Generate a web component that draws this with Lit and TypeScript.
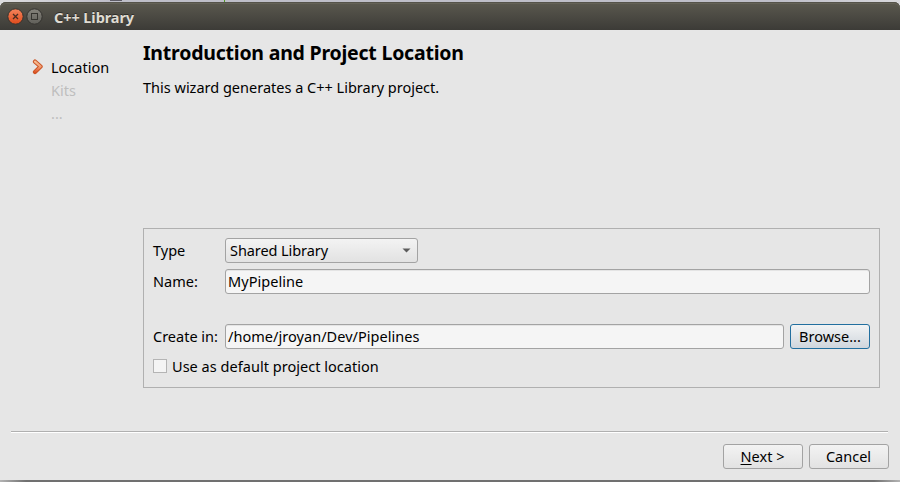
import { LitElement, html, css } from "lit";
import { customElement } from "lit/decorators.js";

@customElement("app-root")
export class AppRoot extends LitElement {
  static styles = css`
    :host {
      display: flex;
      flex-direction: column;
      box-sizing: border-box;
      width: 900px;
      height: 482px;
      overflow: hidden;
      background: linear-gradient(90deg, #dedee0, #bebec8 110px, #bebec8 780px, #d8d8dc);
      font: 14.5px/20px "Noto Sans", sans-serif;
      color: #000;
      white-space: nowrap;
    }
    * { box-sizing: border-box; }
    .desktop {
      flex: none;
      height: 2px;
      display: flex;
    }
    .tab { width: 12px; height: 1px; margin-left: 110px; background: #5c5a64; }
    .caret { width: 1px; height: 2px; margin-left: 102px; background: #4f9a22; }
    .titlebar {
      flex: none;
      height: 28px;
      display: flex;
      align-items: center;
      padding: 1px 0 0 7px;
      border-radius: 6px 6px 0 0;
      background: linear-gradient(#5b594f, #3c3b37);
      box-shadow: inset 0 1px #55534a, inset 0 2px #646257;
    }
    .titlebar svg { display: block; margin-right: 2px; }
    .caption {
      margin-left: 9px;
      font-weight: 700;
      font-size: 14.5px;
      color: #dfdbd2;
      letter-spacing: -0.08px;
      text-shadow: 0 -1px #2e2d2a;
    }
    .body {
      flex: none;
      height: 450px;
      background: #e6e6e6;
      display: flex;
      flex-direction: column;
    }
    .main { display: flex; height: 401px; }
    .steps { width: 143px; padding: 27px 0 0 32px; }
    .step { display: flex; height: 23px; line-height: 20px; color: #bebebe; }
    .mark { width: 19px; padding-top: 2px; }
    .mark svg { display: block; }
    .current { color: #000; }
    .page { width: 737px; }
    h1 {
      margin: 0;
      padding-top: 9px;
      font-size: 19.5px;
      line-height: 27px;
      font-weight: 700;
      letter-spacing: -0.22px;
    }
    .intro { margin-top: 11px; }
    .form {
      margin-top: 131px;
      height: 160px;
      border: 1px solid #b0b0b0;
      padding: 9px;
      display: flex;
      flex-direction: column;
    }
    .row { display: flex; height: 25px; margin-bottom: 6px; line-height: 25px; }
    .row.name { margin-bottom: 30px; }
    .row.location { margin-bottom: 10px; }
    .label { width: 72px; flex: none; }
    .field {
      flex: 1;
      height: 25px;
      line-height: 23px;
      border: 1px solid #a3a3a3;
      border-radius: 3px;
      background: #f5f5f5;
      box-shadow: inset 0 1px #e4e4e4;
      padding-left: 2px;
      letter-spacing: 0.04px;
    }
    .combo {
      width: 193px;
      height: 25px;
      line-height: 23px;
      border: 1px solid #a3a3a3;
      border-radius: 3px;
      background: linear-gradient(#f3f3f3, #e2e2e2);
      display: flex;
      justify-content: space-between;
      align-items: center;
      padding: 0 6px 0 4px;
      letter-spacing: -0.08px;
    }
    .button {
      width: 80px;
      height: 25px;
      line-height: 23px;
      text-align: center;
      border: 1px solid #a3a3a3;
      border-radius: 3px;
      background: linear-gradient(#f3f3f3, #e2e2e2);
      margin-left: 6px;
    }
    .actions .button { padding-right: 1px; }
    .focus {
      border-color: #226f9f;
      background: linear-gradient(#f2f3f4, #cfd6dd);
    }
    .key { text-decoration: underline; text-decoration-thickness: 1px; text-underline-offset: 2px; }
    .check { display: flex; line-height: 15px; height: 14px; letter-spacing: 0.03px; }
    .box {
      width: 14px;
      height: 14px;
      border: 1px solid #b4b4b4;
      background: #f4f4f4;
      margin-right: 5px;
    }
    .rule {
      margin: 0 12px 0 11px;
      height: 2px;
      background: #fff;
      border-top: 1px solid #b0b0b0;
    }
    .actions { display: flex; justify-content: flex-end; padding: 11px 11px 0 0; }
    .shadow {
      flex: none;
      height: 2px;
      background: linear-gradient(90deg, #b4b4b4, #707070 26px, #707070 874px, #b4b4b4);
    }
  `;

  render() {
    return html`
      <div class="desktop"><i class="tab"></i><i class="caret"></i></div>
      <div class="titlebar">
        <svg width="17" height="17" viewBox="0 0 17 17">
          <defs>
            <linearGradient id="close" x2="0" y2="1"><stop stop-color="#f4845c" /><stop offset="1" stop-color="#df4b1c" /></linearGradient>
          </defs>
          <circle cx="8.5" cy="8.5" r="7.7" fill="url(#close)" stroke="#34332f" />
          <path d="M6 6l5 5M11 6l-5 5" stroke="#4a2c20" stroke-width="1.3" />
        </svg>
        <svg width="17" height="17" viewBox="0 0 17 17">
          <defs>
            <linearGradient id="max" x2="0" y2="1"><stop stop-color="#85837b" /><stop offset="1" stop-color="#605f59" /></linearGradient>
          </defs>
          <circle cx="8.5" cy="8.5" r="7.7" fill="url(#max)" stroke="#34332f" />
          <rect x="5.5" y="5.5" width="6" height="6" fill="none" stroke="#35342f" />
        </svg>
        <span class="caption">C++ Library</span>
      </div>
      <div class="body">
        <div class="main">
          <div class="steps">
            <div class="step current">
              <span class="mark">
                <svg width="12" height="16" viewBox="0 0 12 16">
                  <defs>
                    <linearGradient id="arrow" gradientUnits="userSpaceOnUse" x1="0" y1="1" x2="0" y2="14"><stop stop-color="#f8c79b" /><stop offset=".5" stop-color="#f3a076" /><stop offset="1" stop-color="#dc4a1c" /></linearGradient>
                  </defs>
                  <path d="M3 2.6L8.6 7.5L3 13" fill="none" stroke="#cb5526" stroke-width="4.2" stroke-linecap="round" stroke-linejoin="round" />
                  <path d="M3 2.6L8.6 7.5L3 13" fill="none" stroke="url(#arrow)" stroke-width="2.2" stroke-linecap="round" stroke-linejoin="round" />
                </svg>
              </span>
              <span>Location</span>
            </div>
            <div class="step"><span class="mark"></span><span>Kits</span></div>
            <div class="step"><span class="mark"></span><span>...</span></div>
          </div>
          <div class="page">
            <h1>Introduction and Project Location</h1>
            <div class="intro">This wizard generates a C++ Library project.</div>
            <div class="form">
              <div class="row">
                <span class="label">Type</span>
                <div class="combo">
                  <span>Shared Library</span>
                  <svg width="9" height="5" viewBox="0 0 9 5"><path d="M.5 .5h8L4.5 4.5z" fill="#5c5c5c" /></svg>
                </div>
              </div>
              <div class="row name">
                <span class="label">Name:</span>
                <div class="field">MyPipeline</div>
              </div>
              <div class="row location">
                <span class="label">Create in:</span>
                <div class="field">/home/jroyan/Dev/Pipelines</div>
                <div class="button focus">Browse...</div>
              </div>
              <div class="check"><span class="box"></span><span>Use as default project location</span></div>
            </div>
          </div>
        </div>
        <div class="rule"></div>
        <div class="actions">
          <div class="button"><span class="key">N</span>ext &gt;</div>
          <div class="button">Cancel</div>
        </div>
      </div>
      <div class="shadow"></div>
    `;
  }
}
